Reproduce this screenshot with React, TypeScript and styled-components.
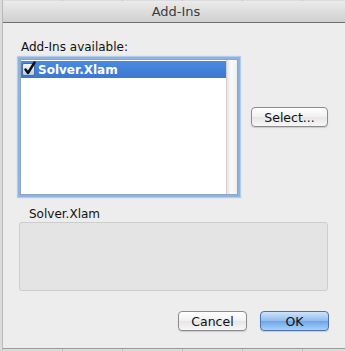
import React from "react";
import styled, { createGlobalStyle } from "styled-components";

const Global = createGlobalStyle`
  html, body { margin: 0; padding: 0; }
  body {
    width: 345px; height: 351px; overflow: hidden;
    background: #d4d4d6;
    font-family: "Lucida Grande", "DejaVu Sans", sans-serif;
  }
`;

const Backdrop = styled.div`
  width: 345px;
  height: 351px;
  box-sizing: border-box;
  padding: 1px 0 0 3px;
  background:
    repeating-linear-gradient(90deg, transparent 0 2px, #c2c2c4 2px 3px, transparent 3px 60px),
    #dcdcde;
`;

const Dialog = styled.div`
  width: 342px;
  height: 347px;
  display: flex;
  flex-direction: column;
  background: #ededed;
  border-bottom: 1px solid #9a9a9a;
  box-shadow: -1px 0 0 #b9b9b9;
`;

const TitleBar = styled.div`
  height: 21px;
  flex: none;
  display: flex;
  align-items: center;
  justify-content: center;
  background: linear-gradient(#ebebeb, #d0d0d0);
  border-bottom: 1px solid #6d6d6d;
  font-size: 13px;
  color: #3c3c3c;
  padding-left: 4px;
`;

const Body = styled.div`
  flex: 1;
  display: flex;
  flex-direction: column;
  padding: 17px 0 0 16px;
`;

const Label = styled.div<{ $indent?: number }>`
  font-size: 12px;
  color: #111;
  padding-left: ${(p) => p.$indent ?? 1}px;
  line-height: 14px;
`;

const TopRow = styled.div`
  display: flex;
  gap: 13px;
  margin-top: 3px;
`;

const ListBox = styled.div`
  width: 216px;
  height: 134px;
  display: flex;
  background: #fff;
  border: 1px solid #8aa6c9;
  box-shadow: 0 0 0 2px #8fb3e0, 0 0 1px 3px #b4cdea;
  margin: 2px 0 0 1px;
`;

const Items = styled.div`
  flex: 1;
  padding-top: 1px;
`;

const ItemRow = styled.div<{ $selected?: boolean }>`
  height: 17px;
  display: flex;
  align-items: center;
  gap: 3px;
  padding-left: 1px;
  background: ${(p) => (p.$selected ? "linear-gradient(#4a8ae0, #3b78cf)" : "transparent")};
  color: ${(p) => (p.$selected ? "#fff" : "#000")};
  font-weight: bold;
  font-size: 12px;
`;

const Check = styled.span`
  position: relative;
  width: 13px;
  height: 13px;
  box-sizing: border-box;
  border: 1px solid #4f6f99;
  border-radius: 2px;
  background: linear-gradient(#f2f7fd, #b5cdec);
  flex: none;
`;

const CheckMark = styled.svg`
  position: absolute;
  left: 0;
  top: -3px;
  overflow: visible;
`;

const ScrollTrack = styled.div`
  width: 10px;
  background: linear-gradient(90deg, #e4e4e4, #fafafa 40%, #efefef);
  border-left: 1px solid #cfcfcf;
`;

const Side = styled.div`
  padding-top: 50px;
`;

const Button = styled.button<{ $primary?: boolean; $w: number }>`
  width: ${(p) => p.$w}px;
  height: 20px;
  box-sizing: border-box;
  border-radius: 4px;
  border: 1px solid ${(p) => (p.$primary ? "#4d73a8" : "#8c8c8c")};
  background: ${(p) =>
    p.$primary
      ? "linear-gradient(#cfe3fb, #8fbbef 50%, #6da5ea 51%, #a7d0fa)"
      : "linear-gradient(#ffffff, #f1f1f1 50%, #e6e6e6 51%, #f7f7f7)"};
  box-shadow: 0 1px 1px rgba(0, 0, 0, 0.15);
  font-family: inherit;
  font-size: 12.5px;
  color: #111;
  padding: 0;
  display: flex;
  align-items: center;
  justify-content: center;
`;

const DescLabel = styled(Label)`
  margin-top: 12px;
`;

const DescBox = styled.div`
  width: 309px;
  height: 69px;
  margin: 1px 0 0 0;
  box-sizing: border-box;
  background: #e4e4e4;
  border: 1px solid #cdcdcd;
  border-radius: 3px;
`;

const Buttons = styled.div`
  display: flex;
  justify-content: flex-end;
  gap: 13px;
  padding-right: 16px;
  margin-top: 20px;
`;

export default function App() {
  return (
    <>
      <Global />
      <Backdrop>
        <Dialog>
          <TitleBar>Add-Ins</TitleBar>
          <Body>
            <Label $indent={2}>Add-Ins available:</Label>
            <TopRow>
              <ListBox>
                <Items>
                  <ItemRow $selected>
                    <Check>
                      <CheckMark width="13" height="15" viewBox="0 0 13 15">
                        <path d="M2.5 8.5 L5 12 L11.5 1.5" fill="none" stroke="#0d0d0d" strokeWidth="2.4" strokeLinecap="round" strokeLinejoin="round" />
                      </CheckMark>
                    </Check>
                    Solver.Xlam
                  </ItemRow>
                </Items>
                <ScrollTrack />
              </ListBox>
              <Side>
                <Button $w={77}>Select...</Button>
              </Side>
            </TopRow>
            <DescLabel $indent={10}>Solver.Xlam</DescLabel>
            <DescBox />
            <Buttons>
              <Button $w={69}>Cancel</Button>
              <Button $w={69} $primary>OK</Button>
            </Buttons>
          </Body>
        </Dialog>
      </Backdrop>
    </>
  );
}
